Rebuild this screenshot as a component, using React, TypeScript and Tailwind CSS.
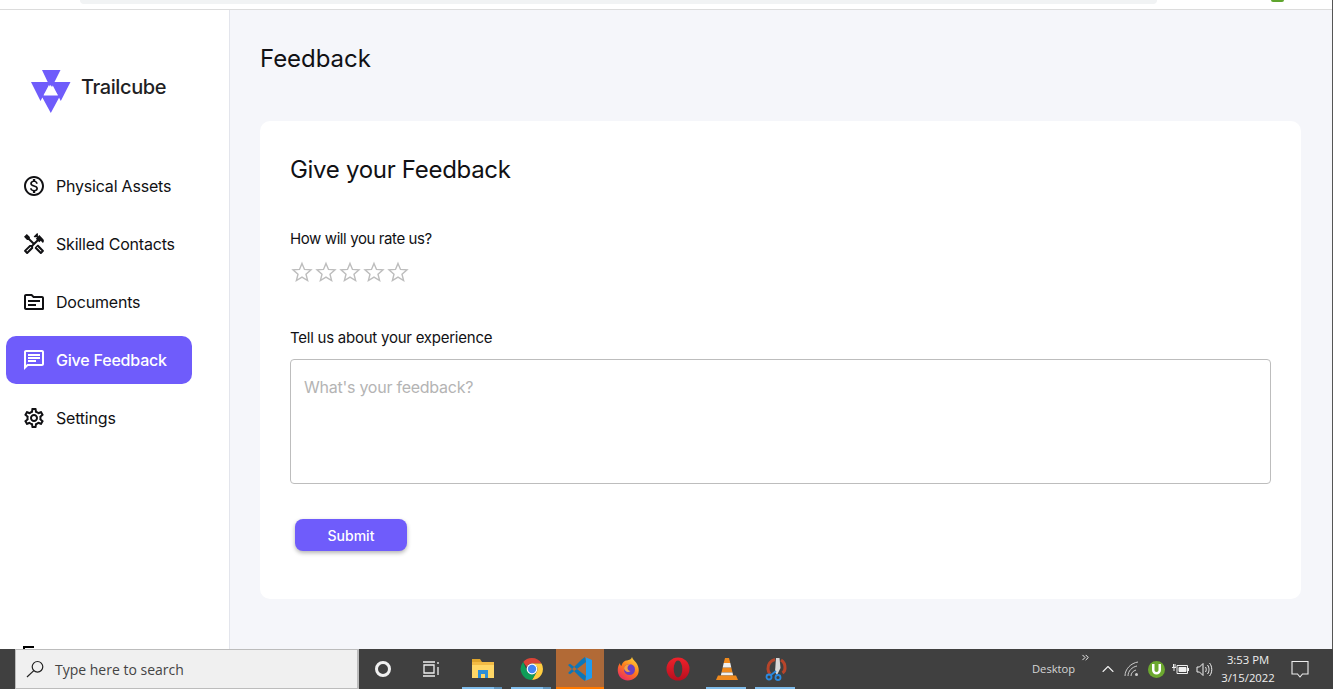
import React from "react";
import { ChevronUp, ChevronsRight } from "lucide-react";
import { MdOutlineMonetizationOn, MdOutlineHandyman, MdOutlineTopic, MdOutlineChat, MdOutlineSettings } from "react-icons/md";

const font = { fontFamily: "Inter, 'Liberation Sans', sans-serif" };
const sysFont = { fontFamily: "'Open Sans', sans-serif" };

function Logo() {
  return (
    <svg width="40" height="44" viewBox="0 0 40 44" className="shrink-0">
      <path fill="#6f5cfb" d="M11 1H29.500L20 20zM0 13H19.500L9.500 32zM20 13H39.500L29.800 32zM10 26H29.500L19.800 44z" />
      <path fill="#fff" d="M19.600 16L27 26.500H12.500z" />
    </svg>
  );
}

function StarOutline() {
  return (
    <svg width="24" height="24" viewBox="0 0 24 24" fill="none" stroke="#bdbdbd" strokeWidth="1.400" strokeLinejoin="miter">
      <path d="M12 3.400l2.500 6 6.500.5-5 4.300 1.600 6.400-5.600-3.500-5.600 3.500 1.600-6.400-5-4.300 6.500-.5z" />
    </svg>
  );
}

const nav = [
  { label: "Physical Assets", icon: <MdOutlineMonetizationOn size={24} /> },
  { label: "Skilled Contacts", icon: <MdOutlineHandyman size={24} /> },
  { label: "Documents", icon: <MdOutlineTopic size={24} /> },
  { label: "Give Feedback", icon: <MdOutlineChat size={24} />, active: true },
  { label: "Settings", icon: <MdOutlineSettings size={24} /> },
];

function Sidebar() {
  return (
    <aside className="relative w-[230px] shrink-0 overflow-hidden border-r border-[#e3e5ec] bg-white">
      <div className="flex items-center gap-[10px] pl-[31px] pt-[59px]">
        <Logo />
        <span className="-mt-[9px] text-[20px] font-medium leading-[24px] tracking-[-0.4px] text-[#1f1f24]">Trailcube</span>
      </div>
      <nav className="mt-[49px] flex flex-col gap-[10px] pl-[6px]">
        {nav.map((n) => (
          <div
            key={n.label}
            className={
              "flex h-[48px] w-[186px] items-center gap-[10px] rounded-[10px] pl-[16px] text-[16px] " +
              (n.active ? "bg-[#6f5cfb] font-medium text-white" : "text-[#111114]")
            }
          >
            {n.icon}
            <span className="tracking-[-0.2px]">{n.label}</span>
          </div>
        ))}
      </nav>
      <div className="absolute bottom-[-2px] left-[23px] h-[5px] w-[11px] border-l-2 border-t-2 border-black" />
    </aside>
  );
}

function Taskbar() {
  return (
    <div className="flex h-[40px] shrink-0 items-stretch bg-[#404040] text-white">
      <div className="w-[15px] shrink-0" />
      <div className="flex w-[344px] shrink-0 items-center border border-r-2 border-[#bcbcbc] bg-[#f0f0f0] pl-[10px]">
        <svg width="18" height="18" viewBox="0 0 18 18" fill="none" stroke="#222" strokeWidth="1.200">
          <circle cx="11.500" cy="6.800" r="5.300" />
          <path d="M7.800 10.600L1 17" />
        </svg>
        <span className="ml-[11px] text-[14px] text-[#444]" style={sysFont}>Type here to search</span>
      </div>
      <div className="flex w-[48px] shrink-0 items-center justify-center">
        <div className="h-[16px] w-[16px] rounded-full border-[3px] border-[#f0f0f0]" />
      </div>
      <div className="flex w-[48px] shrink-0 items-center justify-center">
        <svg width="18" height="16" viewBox="0 0 18 16" fill="none" stroke="#eee" strokeWidth="1.300">
          <path d="M1 1h12M1 15h12M2 4h10v8H2zM16 1v2M16 6v8" />
        </svg>
      </div>
      <div className="w-[3px] shrink-0" />
      <TaskIcon underline split><Files /></TaskIcon>
      <TaskIcon underline split><Chrome /></TaskIcon>
      <div className="relative flex w-[48px] shrink-0 items-center justify-center bg-[#b26a36]">
        <VSCode />
        <div className="absolute bottom-0 right-0 top-0 w-[4px] bg-[#a8683a]" />
        <div className="absolute bottom-0 left-0 right-0 h-[2px] bg-[#ff7a00]" />
      </div>
      <TaskIcon><Firefox /></TaskIcon>
      <TaskIcon><Opera /></TaskIcon>
      <TaskIcon underline><Vlc /></TaskIcon>
      <TaskIcon underline><Snip /></TaskIcon>
      <div className="flex-1" />
      <div className="relative flex w-[65px] shrink-0 items-center pl-[1px] text-[11.200px] text-[#d5d5d5]" style={sysFont}>
        <span>Desktop</span>
        <ChevronsRight size={11} strokeWidth={2} className="absolute right-[5px] top-[3px] text-white" />
      </div>
      <div className="flex w-[24px] shrink-0 items-center justify-center"><ChevronUp size={20} strokeWidth={1.300} className="text-[#eee]" /></div>
      <div className="flex w-[24px] shrink-0 items-center justify-center"><Wifi /></div>
      <div className="flex w-[24px] shrink-0 items-center justify-center"><Torrent /></div>
      <div className="flex w-[24px] shrink-0 items-center justify-center"><Battery /></div>
      <div className="flex w-[24px] shrink-0 items-center justify-center"><Speaker /></div>
      <div className="flex w-[64px] shrink-0 flex-col items-center justify-center text-[11.300px] leading-[18px] text-[#eee]" style={sysFont}>
        <span>3:53 PM</span>
        <span>3/15/2022</span>
      </div>
      <div className="flex w-[40px] shrink-0 items-center justify-center"><Notify /></div>
      <div className="w-[13px] shrink-0" />
    </div>
  );
}

function TaskIcon({ children, underline, split }: { children: React.ReactNode; underline?: boolean; split?: boolean }) {
  return (
    <div className="relative flex w-[49px] shrink-0 items-center justify-center">
      {children}
      {underline && (
        <div className="absolute bottom-0 left-[4px] flex h-[2px] w-[40px]">
          <div className="flex-1 bg-[#80bdec]" />
          {split && <div className="w-[8px] bg-[#5f93bb]" />}
        </div>
      )}
    </div>
  );
}

function Files() {
  return (
    <svg width="22" height="20" viewBox="0 0 22 20">
      <path fill="#dfa52c" d="M0 0h8l2 3H0z" />
      <path fill="#ffd766" d="M0 3h22v16H0z" />
      <path fill="#f2bb45" d="M0 3h22v3H0z" />
      <path fill="#2e8fd8" d="M6 19v-8h10v8h-3v-4H9v4z" />
    </svg>
  );
}
function Chrome() {
  return (
    <svg width="24" height="24" viewBox="0 0 24 24">
      <path fill="#db4437" d="M12 1a11 11 0 0 1 9.500 5.500H12a5.500 5.500 0 0 0-5.200 3.600L3.200 5A11 11 0 0 1 12 1z" />
      <path fill="#ffcd40" d="M21.500 6.500A11 11 0 0 1 12 23l4.700-8.200a5.500 5.500 0 0 0 0-5.600L12 6.500z" />
      <path fill="#0f9d58" d="M3.200 5l4.200 9.500A5.500 5.500 0 0 0 16.700 15L12 23A11 11 0 0 1 3.200 5z" />
      <circle cx="12" cy="12" r="5.400" fill="#fff" />
      <circle cx="12" cy="12" r="4.200" fill="#4285f4" />
    </svg>
  );
}
function VSCode() {
  return (
    <svg width="26" height="26" viewBox="0 0 26 26">
      <path fill="#0d76b8" d="M1 9l2-1.200L19 20l-1 5-3.500-2.500zM1 17l2 1.200L19 6l-1-5-3.500 2.500z" />
      <path fill="#1f9cf0" d="M18 1l7 3v18l-7 3c1-1 1-1 1-2.500v-19C19 2 19 2 18 1z" />
    </svg>
  );
}
function Firefox() {
  return (
    <svg width="24" height="24" viewBox="0 0 24 24">
      <defs>
        <linearGradient id="ff" x1="0.800" y1="0" x2="0.200" y2="1">
          <stop offset="0" stopColor="#ffd43b" />
          <stop offset="0.500" stopColor="#ff7a1a" />
          <stop offset="1" stopColor="#e8246a" />
        </linearGradient>
      </defs>
      <path fill="url(#ff)" d="M15 0c.8 2.500 2.500 3.500 4 5.500 3.500 4.500 4 11-.5 15-4.500 4-11.500 4-15.500-.5C-.5 15.500.5 9 3 6c0 1.500.5 2.500 1.500 3C5 6 7 3.500 10 3.500 12 3 14.500 2.500 15 0z" />
      <circle cx="12.500" cy="12.500" r="5.500" fill="#6a3fc4" />
      <path fill="#f6a341" d="M7 11c1-3 4-4.500 7-3.500-2 .2-3.500 1.500-3.500 3.500 0 1.500 1 3 3 3-2.500 2-6 .5-6.500-3z" />
    </svg>
  );
}
function Opera() {
  return (
    <svg width="24" height="24" viewBox="0 0 24 24">
      <defs>
        <linearGradient id="op" x1="0" y1="0" x2="0" y2="1">
          <stop offset="0" stopColor="#f0222b" />
          <stop offset="1" stopColor="#b80f1f" />
        </linearGradient>
      </defs>
      <circle cx="12" cy="12" r="11.500" fill="url(#op)" />
      <ellipse cx="12" cy="12" rx="4.300" ry="8.500" fill="#404040" />
    </svg>
  );
}
function Vlc() {
  return (
    <svg width="22" height="22" viewBox="0 0 22 22">
      <path fill="#f08a1d" d="M9 0h4l1.300 5H7.700zM6.700 9.500h8.600l1.200 5h-11z" />
      <path fill="#efefef" d="M7.700 5h6.600l1 4.500H6.700zM5.500 14.500h11l.7 3H4.800z" />
      <path fill="#f08a1d" d="M2 17.500h18l2 4.500H0z" />
    </svg>
  );
}
function Snip() {
  return (
    <svg width="22" height="24" viewBox="0 0 22 24" fill="none">
      <path d="M10 2.500A9 9 0 0 0 3 12c0 2 .8 3.500 2 5" stroke="#b8452a" strokeWidth="3" />
      <path d="M16 3a9 9 0 0 1 4 8c0 2-1 4-2.500 5" stroke="#b8452a" strokeWidth="3" />
      <path d="M11 1h3.500l1 10-3.500 7-2-3z" fill="#d9d9d9" />
      <circle cx="4" cy="20" r="2.500" stroke="#2b8ae0" strokeWidth="1.800" />
      <circle cx="13" cy="20.500" r="2.500" stroke="#2b8ae0" strokeWidth="1.800" />
      <path d="M6 18l5-4" stroke="#2b8ae0" strokeWidth="1.800" />
    </svg>
  );
}
function Wifi() {
  return (
    <svg width="16" height="16" viewBox="0 0 16 16" fill="none" stroke="#ccc" strokeWidth="1">
      <path d="M1 15C1 8 7 2 14 1M4 15c0-5 4-9 9-10M7 15c0-3 2-5 5-6" />
      <circle cx="12.500" cy="13.500" r="1.500" fill="#ccc" stroke="none" />
    </svg>
  );
}
function Torrent() {
  return (
    <svg width="17" height="17" viewBox="0 0 17 17">
      <circle cx="8.500" cy="8.500" r="8.500" fill="#6ca92f" />
      <path d="M4 3v6c0 2.500 2 4.500 4.500 4.500S13 11.500 13 9V3h-2.500v6c0 1.200-.8 2-2 2s-2-.8-2-2V3z" fill="#fff" />
    </svg>
  );
}
function Battery() {
  return (
    <svg width="17" height="12" viewBox="0 0 17 12" fill="none" stroke="#eee" strokeWidth="1">
      <path d="M5 2.500h10.500v8H5z" />
      <path d="M7 4.500h7v4H7zM16.500 5v3" fill="#eee" />
      <path d="M0 4.500h4M1.500 1v3M3 1v3M2 5v3" />
    </svg>
  );
}
function Speaker() {
  return (
    <svg width="17" height="15" viewBox="0 0 17 15" fill="none" stroke="#eee" strokeWidth="1">
      <path d="M1 5h2.500L7 1.500v12L3.500 10H1z" />
      <path d="M9.500 5c1 1.500 1 3.500 0 5M11.500 3c2 2.500 2 6.500 0 9M13.500 1c3 3.500 3 9.500 0 13" />
    </svg>
  );
}
function Notify() {
  return (
    <svg width="18" height="18" viewBox="0 0 18 18" fill="none" stroke="#eee" strokeWidth="1.100">
      <path d="M1 1.500h16v12.500h-5.500l-2.500 3-2.500-3H1z" />
    </svg>
  );
}

export default function App() {
  return (
    <div className="flex h-[689px] w-[1333px] flex-col overflow-hidden bg-white" style={font}>
      <div className="flex min-h-0 flex-1 flex-col border-r border-[#555]">
        <div className="flex h-[10px] shrink-0 border-b border-[#dcdcdc] bg-white">
          <div className="ml-[80px] h-[4px] w-[1077px] rounded-b-[10px] bg-[#f1f3f4]" />
          <div className="ml-[114px] h-[2px] w-[13px] rounded-b-full bg-[#5fa52e]" />
        </div>
        <div className="flex min-h-0 flex-1">
          <Sidebar />
          <main className="flex-1 bg-[#f5f6fa] pl-[30px] pr-[31px]">
            <h1 className="mt-[34px] text-[24px] leading-[30px] tracking-[-0.05px] text-[#111114]">Feedback</h1>
            <section className="mt-[47px] h-[478px] rounded-[10px] bg-white px-[30px]">
              <h2 className="pt-[34px] text-[24px] leading-[30px] tracking-[-0.3px] text-[#111114]">Give your Feedback</h2>
              <p className="mt-[44px] text-[15px] leading-[20px] tracking-[-0.4px] text-[#111114]">How will you rate us?</p>
              <div className="mt-[11px] flex">
                {[0, 1, 2, 3, 4].map((i) => (
                  <StarOutline key={i} />
                ))}
              </div>
              <p className="mt-[44px] text-[15px] leading-[20px] tracking-[-0.24px] text-[#111114]">Tell us about your experience</p>
              <div className="mt-[11px] h-[125px] rounded-[4px] border border-[#bdbdbd] px-[13px] pt-[17px] text-[16px] leading-[20px] tracking-[-0.25px] text-[#b4b4b4]">
                What's your feedback?
              </div>
              <button className="ml-[5px] mt-[35px] flex h-[32px] w-[112px] items-center justify-center rounded-[8px] bg-[#6f5cfb] text-[14px] font-medium text-white shadow-[0_2px_4px_rgba(0,0,0,0.3)]">
                Submit
              </button>
            </section>
          </main>
        </div>
      </div>
      <Taskbar />
    </div>
  );
}
